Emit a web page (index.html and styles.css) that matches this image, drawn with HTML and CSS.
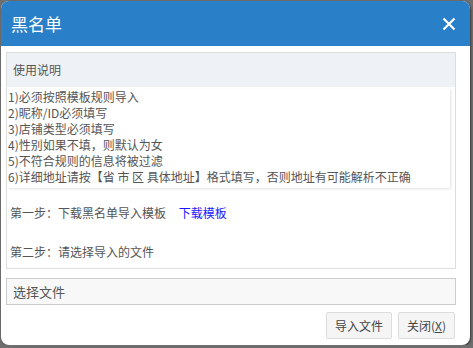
FILE: index.html
```html
<!DOCTYPE html>
<html lang="zh-CN">
<head>
    <meta charset="UTF-8">
    <title>黑名单</title>
    <link rel="stylesheet" href="styles.css">
</head>
<body>
    <div class="dialog">
        <div class="dialog-title">
            <span>黑名单</span>
            <svg class="close" width="14" height="14" viewBox="0 0 14 14">
                <path d="M1.5 1.5 L12.5 12.5 M12.5 1.5 L1.5 12.5" stroke="#fff" stroke-width="2.2" fill="none"/>
            </svg>
        </div>

        <div class="dialog-body">
            <div class="panel">
                <div class="panel-head">使用说明</div>
                <div class="rules">
                    <div>1)必须按照模板规则导入</div>
                    <div>2)昵称/ID必须填写</div>
                    <div>3)店铺类型必须填写</div>
                    <div>4)性别如果不填，则默认为女</div>
                    <div>5)不符合规则的信息将被过滤</div>
                    <div>6)详细地址请按【省 市 区 具体地址】格式填写，否则地址有可能解析不正确</div>
                </div>
                <div class="step step-one">第一步：下载黑名单导入模板 <a class="download" href="#">下载模板</a></div>
                <div class="step step-two">第二步：请选择导入的文件</div>
            </div>

            <div class="file-box">选择文件</div>

            <div class="buttons">
                <button class="btn">导入文件</button>
                <button class="btn">关闭(<u>X</u>)</button>
            </div>
        </div>
    </div>
</body>
</html>
```

FILE: styles.css
```css
body {
    margin: 0;
    background-color: #6e6e6e;
    font-family: "Noto Sans CJK SC", "Microsoft YaHei", sans-serif;
}

.dialog {
    margin: 1px 0 0 1px;
    width: 469px;
    height: 344px;
    background-color: #fff;
    border-radius: 8px;
    overflow: hidden;
    box-shadow: 1px 1px 2px #3c3c3c;
}

.dialog-title {
    height: 45px;
    background-color: #2a80c8;
    color: #fff;
    font-size: 17px;
    padding: 0 14px 0 10px;
    display: flex;
    align-items: center;
    justify-content: space-between;
}

.dialog-body {
    padding: 6px 14px 0 5px;
}

.panel {
    border: 1px solid #ddd;
    height: 215px;
    font-size: 12px;
    color: #555;
}

.panel-head {
    height: 34px;
    line-height: 34px;
    background-color: #eef2f6;
    padding-left: 6px;
    color: #555;
}

.rules {
    margin: 2px 5px 0 1px;
    padding: 0 0 3px;
    height: 96px;
    line-height: 16px;
    box-shadow: 1px 1px 2px rgba(0, 0, 0, 0.12);
}

.step {
    padding-left: 3px;
    line-height: 16px;
}

.step-one {
    margin-top: 17px;
}

.step-two {
    margin-top: 23px;
}

.download {
    color: #1a1aff;
    text-decoration: none;
    margin-left: 10px;
}

.file-box {
    margin-top: 9px;
    height: 25px;
    line-height: 25px;
    border: 1px solid #ccc;
    background-color: #f8f8f8;
    padding-left: 6px;
    font-size: 13px;
    color: #555;
}

.buttons {
    margin-top: 7px;
    display: flex;
    justify-content: flex-end;
    gap: 6px;
    padding-right: 1px;
}

.btn {
    height: 27px;
    padding: 0 8px;
    border: 1px solid #ddd;
    border-radius: 2px;
    background-color: #f5f5f5;
    font-family: inherit;
    font-size: 12px;
    color: #444;
}
```
